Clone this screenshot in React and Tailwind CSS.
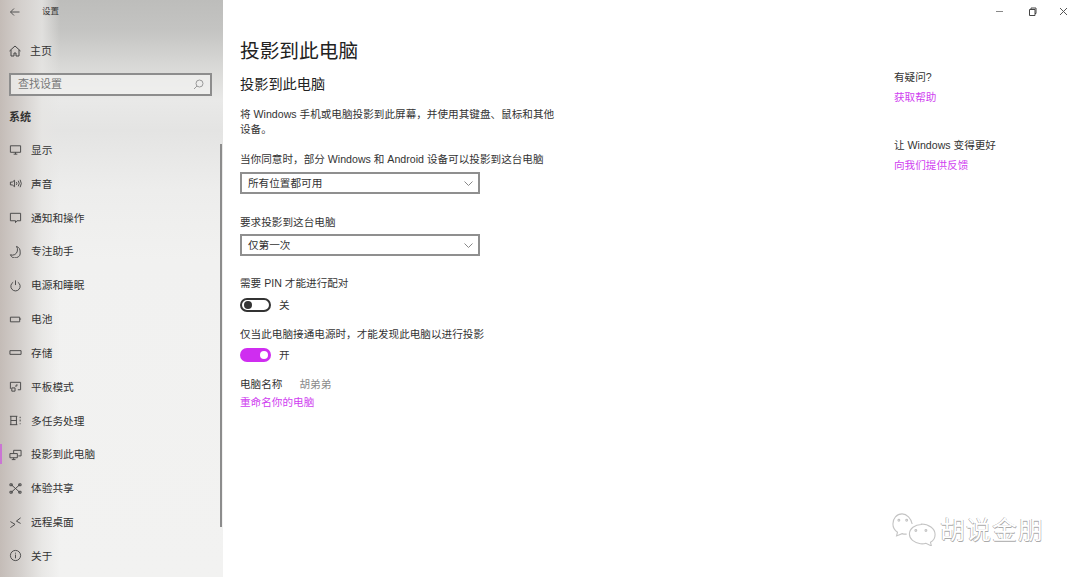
const Ic = ({ children }) => (
  <svg width="13" height="13" viewBox="0 0 14 14" fill="none" stroke="#444" strokeWidth="1" className="shrink-0">
    {children}
  </svg>
);

const items = [
  ["显示", <path d="M1.500 3h11v7h-11zM5 12h4M7 10v2" />],
  ["声音", <path d="M1.500 5.500h2L6 3.500v7l-2.500-2h-2zM8 5.500q1 1.500 0 3M10 4q2 3 0 6M12 3q2.500 4 0 8" />],
  ["通知和操作", <path d="M1.500 2.500h11v8h-4l-1.500 2v-2h-5.500z" />],
  ["专注助手", <path d="M8 1.500a6 6 0 0 1 1 5 5.500 5.500 0 0 1-7.500 4 5.500 5.500 0 0 0 10.500-3 6 6 0 0 0-4-6z" />],
  ["电源和睡眠", <path d="M7 1.500v5M4.500 3.500a5 5 0 1 0 5 0" />],
  ["电池", <path d="M1.500 4.500h10v5h-10zM11.500 6.500h1.500" />],
  ["存储", <path d="M1 5h12v4h-12z" />],
  ["平板模式", <path d="M1.500 2.500h11v8h-3M1.500 2.500v7M8.500 4.500v2h-2M3 8.500h3.500v3.500h-3.500z" />],
  ["多任务处理", <path d="M1 2.500h8M1 11.500h8M2 2.500v9M8 2.500v9M2 7h6M12 3v1.500M12 6v2M12 10v1" />],
  ["投影到此电脑", <path d="M5 2.500h8v6h-3M5 2.500v3M1 6h8v4.500h-8zM3 12.500h4M5 10.500v2" />],
  ["体验共享", <path d="M2 2.500l10 9M12 2.500l-10 9M1 2h2.500v2h-2.500zM10.500 2h2.500v2h-2.500zM1 10h2.500v2h-2.500zM10.500 10h2.500v2h-2.500z" />],
  ["远程桌面", <path d="M1.500 6l5 3-5 3.500M12.500 2l-4.500 3.500 4.500 2.500" />],
  ["关于", <><circle cx="7" cy="7" r="5.500" /><path d="M7 6v4M7 4v1" /></>],
];

const cjk = "font-['Liberation_Sans','Noto_Sans_CJK_SC',sans-serif]";

const Chevron = () => (
  <svg width="9" height="5" viewBox="0 0 9 5" fill="none" stroke="#888" strokeWidth="1">
    <path d="M.5.500 4.500 4.500 8.500.500" />
  </svg>
);

const Select = ({ value }) => (
  <div className="mt-[6px] flex h-[22px] w-[240px] items-center justify-between border-2 border-[#8f8f8f] bg-white pl-[6px] pr-[5px] text-[#333]">
    <span className="pt-px">{value}</span>
    <Chevron />
  </div>
);

const Label = ({ className = "", children }) => (
  <div className={`h-[14px] leading-[14px] text-[#333] ${className}`}>{children}</div>
);

const Toggle = ({ on, label, className = "mt-[8px]" }) => (
  <div className={`flex h-[14px] items-center gap-[8px] text-[#333] ${className}`}>
    {on ? (
      <div className="flex h-[14px] w-[31px] items-center justify-end rounded-full bg-[#cf2df0] pr-[3px]">
        <div className="h-[8px] w-[8px] rounded-full bg-white" />
      </div>
    ) : (
      <div className="flex h-[14px] w-[31px] items-center rounded-full border-2 border-[#333] pl-[2px]">
        <div className="h-[8px] w-[8px] rounded-full bg-[#333]" />
      </div>
    )}
    <span className="pt-px">{label}</span>
  </div>
);

export default function App() {
  return (
    <div className={`relative flex h-[577px] w-[1080px] overflow-hidden bg-white text-[10.620px] ${cjk}`}>
      <aside className="relative flex h-full w-[223px] shrink-0 flex-col bg-[linear-gradient(180deg,#bdbdbb_0px,#c4c4c2_30px,#d6d6d4_62px,#e9e9e8_100px,#e4e4e3_130px,#ededec_190px,#f1f1f0_260px,#f2f2f1_577px)] text-[#333]">
        <div className="pointer-events-none absolute inset-y-0 left-0 w-[60px] bg-[linear-gradient(90deg,#c4bcb7_0%,#d4d0cd_35%,#e6e5e3d0_70%,#e6e5e300_100%)]" />
        <div className="relative flex h-full flex-col">
          <div className="flex h-[23px] items-center pl-[10px]">
            <svg width="10" height="10" viewBox="0 0 10 10" fill="none" stroke="#555" strokeWidth="1">
              <path d="M9.500 5h-9M4 1.500.500 5 4 8.500" />
            </svg>
            <span className="ml-[22px] text-[8.500px]">设置</span>
          </div>
          <div className="mt-[19px] flex h-[18px] items-center gap-[9px] pl-[9px] text-[11px]">
            <svg width="12" height="12" viewBox="0 0 12 12" fill="none" stroke="#444" strokeWidth="1">
              <path d="M.5 6 6 1l5.500 5M2 5v6h3V8h2v3h3V5" />
            </svg>
            <span>主页</span>
          </div>
          <div className="mx-[9px] mt-[13px] flex h-[23px] w-[203px] items-center justify-between border-2 border-[#8d8d8d] bg-[#f2f2f1]/70 pl-[7px] pr-[6px] text-[11px] text-[#777]">
            <span>查找设置</span>
            <svg width="11" height="11" viewBox="0 0 11 11" fill="none" stroke="#999" strokeWidth="1">
              <circle cx="6.500" cy="4.500" r="3.500" />
              <path d="M4 7 1 10" />
            </svg>
          </div>
          <div className="mt-[14px] h-[14px] pl-[9px] text-[11px] font-bold leading-[14px]">系统</div>
          <nav className="mt-[9px] flex flex-col">
            {items.map(([t, icon]) => (
              <div key={t} className="relative flex h-[33.830px] items-center gap-[9px] pl-[9px] text-[10.700px]">
                {t === "投影到此电脑" && (
                  <div className="absolute left-0 top-[7px] h-[20px] w-[2px] bg-[#cf2df0]/50" />
                )}
                <Ic>{icon}</Ic>
                <span>{t}</span>
              </div>
            ))}
          </nav>
        </div>
        <div className="absolute right-[1px] top-[144px] h-[383px] w-[2px] bg-[#8c8c8c]" />
      </aside>

      <main className="flex min-w-0 flex-1 flex-col">
        <div className="flex h-[24px] justify-end pr-[12px] pt-[7px]">
          <div className="flex items-start gap-[22px]">
            <svg className="mr-[2px]" width="9" height="9" viewBox="0 0 9 9" fill="none" stroke="#888" strokeWidth="1"><path d="M1 4.500h7" /></svg>
            <svg width="9" height="9" viewBox="0 0 9 9" fill="none" stroke="#444" strokeWidth="1"><path d="M1.500 2.500h5.500v6h-5.500zM3 2.500v-1.500h5v5.500h-1" /></svg>
            <svg width="9" height="9" viewBox="0 0 9 9" fill="none" stroke="#555" strokeWidth="1"><path d="M1 1l7 7M8 1 1 8" /></svg>
          </div>
        </div>
        <div className="flex flex-1">
          <section className="w-[671px] pl-[17px]">
            <h1 className="mt-[13px] h-[28px] text-[19.700px] font-normal leading-[28px] text-[#222]">投影到此电脑</h1>
            <h2 className="mt-[9px] h-[20px] text-[14.200px] font-normal leading-[20px] text-[#222]">投影到此电脑</h2>
            <p className="mt-[13px] w-[320px] leading-[14.500px] text-[#333]">
              将 Windows 手机或电脑投影到此屏幕，并使用其键盘、鼠标和其他设备。
            </p>
            <Label className="mt-[16px]">当你同意时，部分 Windows 和 Android 设备可以投影到这台电脑</Label>
            <Select value="所有位置都可用" />
            <Label className="mt-[21px]">要求投影到这台电脑</Label>
            <div className="-mt-px"><Select value="仅第一次" /></div>
            <Label className="mt-[20px]">需要 PIN 才能进行配对</Label>
            <Toggle label="关" />
            <Label className="mt-[15px]">仅当此电脑接通电源时，才能发现此电脑以进行投影</Label>
            <Toggle on label="开" className="mt-[7px]" />
            <div className="mt-[15px] flex h-[14px] gap-[17px] leading-[14px]">
              <span className="text-[#333]">电脑名称</span>
              <span className="text-[#8a8a8a]">胡弟弟</span>
            </div>
            <div className="mt-[4px] h-[14px] leading-[14px] text-[#cf3ef0]">重命名你的电脑</div>
          </section>
          <aside className="flex-1 pt-[46px]">
            <Label>有疑问?</Label>
            <div className="mt-[6px] h-[14px] leading-[14px] text-[#cf3ef0]">获取帮助</div>
            <Label className="mt-[34px]">让 Windows 变得更好</Label>
            <div className="mt-[6px] h-[14px] leading-[14px] text-[#cf3ef0]">向我们提供反馈</div>
          </aside>
        </div>
      </main>

      <div className="absolute left-[892px] top-[513px] flex items-center">
        <svg width="44" height="33" viewBox="0 0 48 36" fill="none" stroke="#c4c4c4" strokeWidth="1.200">
          <path d="M22 12C21 6 16 1 11 1 5 1 1 6 1 12c0 4 2 7 5 9l-1 4 6-2.500q2.500 .8 5 .5" />
          <path d="M32 12c8 0 15 5 15 11.500 0 4-2 7-5 8.500l1 4-6-3q-3 1-6 .5c-7-1-12-5-12-10.500 0-6 6-10.500 13-10.500z" fill="#fff" />
          <circle cx="7.500" cy="8" r="1" /><circle cx="16" cy="8" r="1" />
          <circle cx="26" cy="19" r="1" /><circle cx="37" cy="19" r="1" />
        </svg>
        <span className="ml-[4px] text-[25px] leading-[32px] tracking-[1px] text-white [text-shadow:-.5px_-.5px_0_#999,.5px_.5px_0_#aaa]">胡说金朋</span>
      </div>
    </div>
  );
}
